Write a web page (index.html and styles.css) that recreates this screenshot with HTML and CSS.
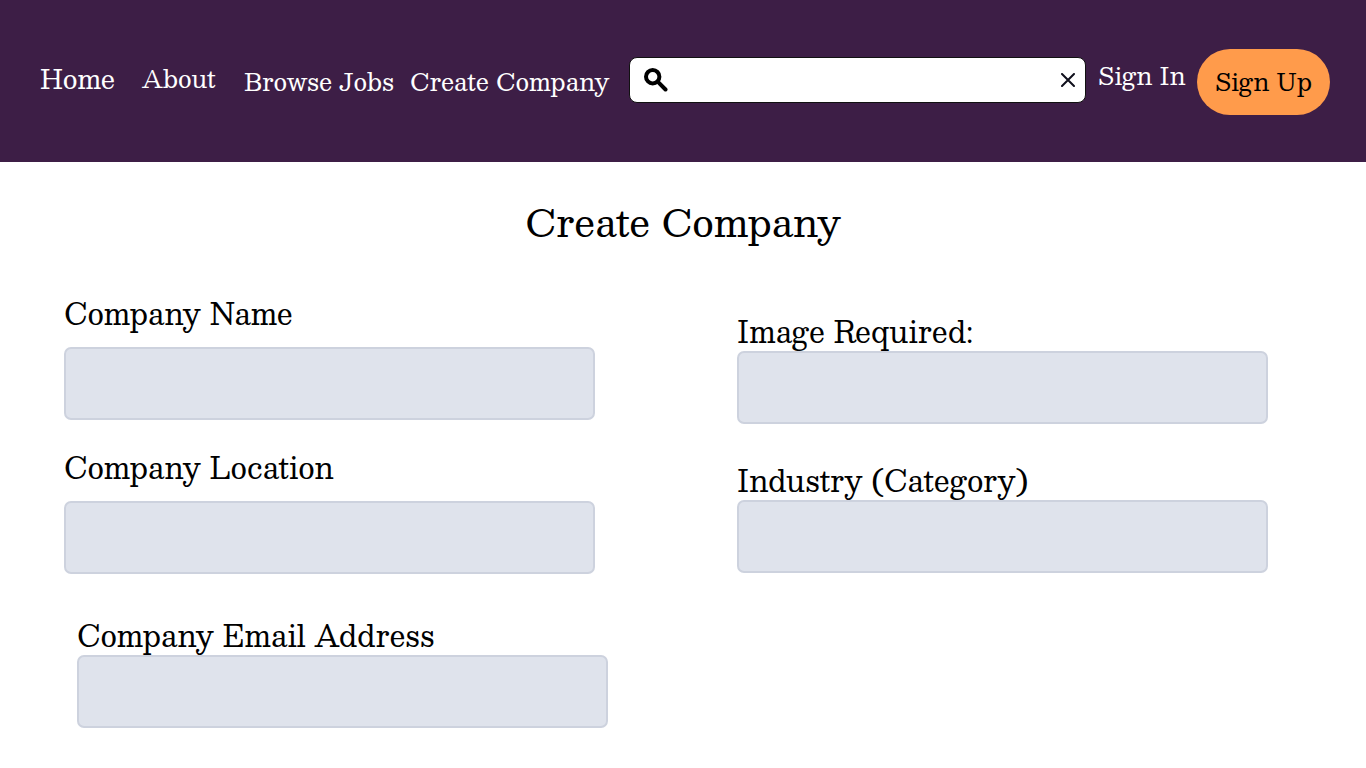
FILE: index.html
```html
<!DOCTYPE html>
<html lang="en">
<head>
<meta charset="utf-8">
<meta name="viewport" content="width=device-width, initial-scale=1">
<title>Create Company</title>
<link rel="stylesheet" href="styles.css">
</head>
<body>
<header class="topbar">
  <nav class="nav">
    <a class="nav-link nav-home" href="#">Home</a>
    <a class="nav-link nav-about" href="#">About</a>
    <a class="nav-link nav-browse" href="#">Browse Jobs</a>
    <a class="nav-link nav-create" href="#">Create Company</a>
  </nav>
  <form class="search" role="search">
    <svg class="search-icon" viewBox="0 0 24 24" aria-hidden="true"><circle cx="8.700" cy="8.700" r="6.700"/><path d="M13.700 13.700L21.500 21.500"/></svg>
    <input class="search-input" type="text" aria-label="Search">
    <button class="search-clear" type="reset" aria-label="Clear search"><svg class="clear-icon" viewBox="0 0 14 14" aria-hidden="true"><path d="M1 1L13 13M13 1L1 13"/></svg></button>
  </form>
  <a class="nav-link sign-in" href="#">Sign In</a>
  <button class="sign-up" type="button">Sign Up</button>
</header>
<main class="page">
  <h1 class="title">Create Company</h1>
  <form class="form">
    <div class="column column-left">
      <div class="field spaced"><label class="label" for="name">Company Name</label><input class="box" id="name" type="text"></div>
      <div class="field spaced"><label class="label" for="location">Company Location</label><input class="box" id="location" type="text"></div>
      <div class="field indented"><label class="label" for="email">Company Email Address</label><input class="box" id="email" type="email"></div>
    </div>
    <div class="column column-right">
      <div class="field"><label class="label" for="image">Image Required:</label><input class="box" id="image" type="text"></div>
      <div class="field"><label class="label" for="industry">Industry (Category)</label><input class="box" id="industry" type="text"></div>
    </div>
  </form>
</main>
</body>
</html>
```
FILE: styles.css
```css
* { box-sizing: border-box; }
body {
  margin: 0;
  background: #fff;
  color: #000;
  font-family: "Besley", "Liberation Serif", serif;
}
.topbar {
  display: flex;
  align-items: flex-start;
  padding: 49px 36px 47px 40px;
  background: #3d1e46;
}
.nav { display: flex; }
.nav-link {
  color: #fff;
  font-size: 24px;
  line-height: 36px;
  text-decoration: none;
  white-space: nowrap;
}
.nav-home { padding-top: 11px; width: 102px; font-size: 26px; }
.nav-about { padding-top: 11px; width: 102px; }
.nav-browse { padding-top: 14px; width: 166px; }
.nav-create { padding-top: 14px; width: 219px; }
.search {
  display: flex;
  flex: 1;
  align-items: center;
  min-width: 0;
  height: 46px;
  margin-top: 8px;
  padding: 0 10px 1px 14px;
  background: #fff;
  border: 1px solid #111;
  border-radius: 8px;
}
.search-icon {
  flex: none;
  width: 24px;
  height: 24px;
  fill: none;
  stroke: #000;
  stroke-width: 4;
  stroke-linecap: round;
}
.search-input {
  flex: 1;
  min-width: 0;
  padding: 0 12px;
  border: 0;
  outline: 0;
  background: none;
  font: inherit;
  font-size: 24px;
}
.search-clear {
  display: flex;
  padding: 0;
  border: 0;
  background: none;
}
.clear-icon {
  width: 14px;
  height: 14px;
  fill: none;
  stroke: #10101c;
  stroke-width: 2;
  stroke-linecap: round;
}
.sign-in { margin: 8px 8px 0 12px; width: 91px; }
.sign-up {
  width: 133px;
  height: 66px;
  padding: 0 0 2px;
  border: 0;
  border-radius: 33px;
  background: #ff9b4b;
  color: #000;
  font: inherit;
  font-size: 24px;
}
.title {
  margin: 33px 0 0;
  font-size: 38px;
  font-weight: 400;
  line-height: 52px;
  text-align: center;
}
.form {
  display: grid;
  grid-template-columns: 1fr 1fr;
  column-gap: 142px;
  padding: 48px 98px 40px 64px;
}
.column { display: flex; flex-direction: column; }
.column-left { gap: 28px; }
.column-right { gap: 38px; padding-top: 18px; }
.field { display: flex; flex-direction: column; gap: 2px; }
.spaced { gap: 16px; }
.indented { margin: 14px -13px 0 13px; }
/* Descenders stay visible over the box below the label. */
.label {
  position: relative;
  font-size: 29px;
  line-height: 36px;
}
.column-left { gap: 29px; }
.box {
  width: 100%;
  height: 73px;
  padding: 0 16px;
  border: 2px solid #cdd2de;
  border-radius: 7px;
  background: #dfe3ec;
  font: inherit;
  font-size: 24px;
}
```
